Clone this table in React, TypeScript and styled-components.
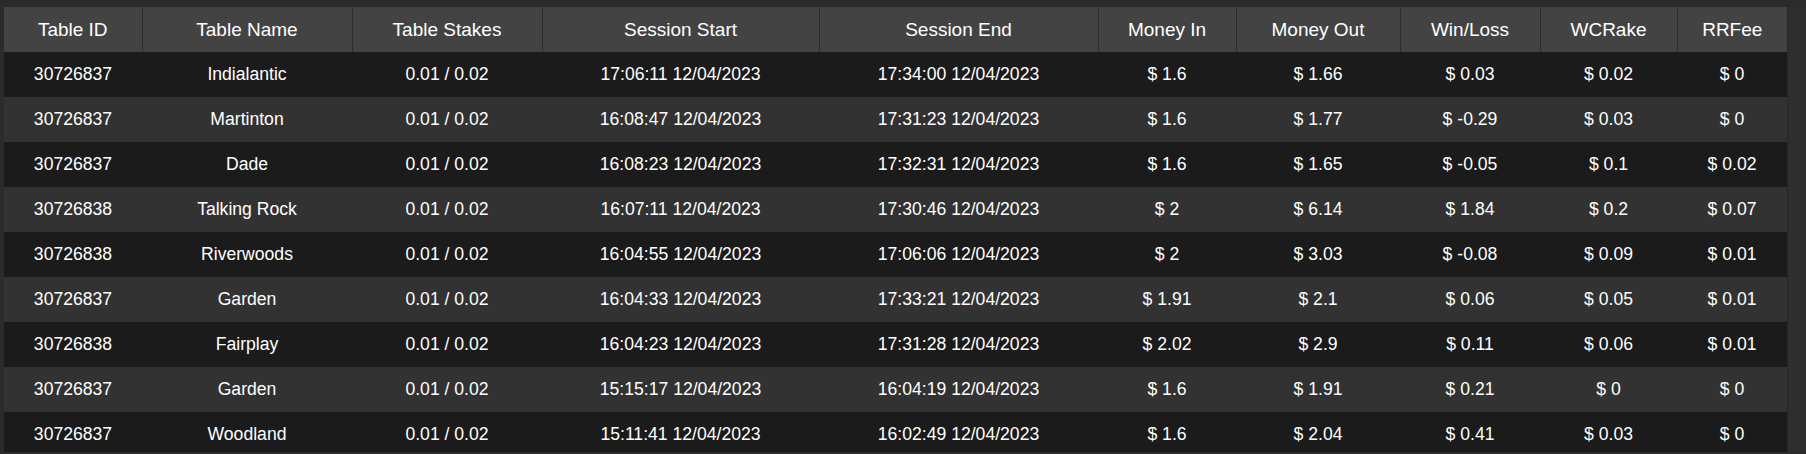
import React from "react";
import styled, { createGlobalStyle } from "styled-components";

const GlobalStyle = createGlobalStyle`
  html, body {
    margin: 0;
    padding: 0;
    background: #2b2b2b;
    overflow: hidden;
  }
  body {
    font-family: "Liberation Sans", Arial, Helvetica, sans-serif;
    color: #ffffff;
  }
`;

const Page = styled.div`
  box-sizing: border-box;
  width: 1806px;
  height: 454px;
  padding: 7px 0 0 4px;
  background: #2b2b2b;
`;

const Frame = styled.div`
  display: flex;
  height: 445px;
`;

const Viewport = styled.div`
  width: 1783px;
  flex: none;
  overflow: hidden;
`;

const ScrollTrack = styled.div`
  flex: 1;
  background: #2e2e2e;
  border-left: 1px solid #262626;
`;

const Table = styled.table`
  width: 1783px;
  border-collapse: collapse;
  table-layout: fixed;
  font-family: "Liberation Sans", Arial, Helvetica, sans-serif;
`;

const HeadCell = styled.th<{ $first?: boolean }>`
  height: 45px;
  padding: 0;
  background: #434343;
  color: #ffffff;
  font-size: 19px;
  font-weight: 400;
  text-align: center;
  border-left: ${(p) => (p.$first ? "none" : "1px solid #2d2d2d")};
`;

const Row = styled.tr<{ $alt: boolean }>`
  background: ${(p) => (p.$alt ? "#323232" : "#1b1b1b")};
`;

const Cell = styled.td`
  height: 45px;
  padding: 0;
  font-size: 17.6px;
  color: #ffffff;
  text-align: center;
  white-space: nowrap;
`;

const columns = [
  { label: "Table ID", width: 138 },
  { label: "Table Name", width: 210 },
  { label: "Table Stakes", width: 190 },
  { label: "Session Start", width: 277 },
  { label: "Session End", width: 279 },
  { label: "Money In", width: 138 },
  { label: "Money Out", width: 164 },
  { label: "Win/Loss", width: 140 },
  { label: "WCRake", width: 137 },
  { label: "RRFee", width: 110 },
];

const rows: string[][] = [
  ["30726837", "Indialantic", "0.01 / 0.02", "17:06:11 12/04/2023", "17:34:00 12/04/2023", "$ 1.6", "$ 1.66", "$ 0.03", "$ 0.02", "$ 0"],
  ["30726837", "Martinton", "0.01 / 0.02", "16:08:47 12/04/2023", "17:31:23 12/04/2023", "$ 1.6", "$ 1.77", "$ -0.29", "$ 0.03", "$ 0"],
  ["30726837", "Dade", "0.01 / 0.02", "16:08:23 12/04/2023", "17:32:31 12/04/2023", "$ 1.6", "$ 1.65", "$ -0.05", "$ 0.1", "$ 0.02"],
  ["30726838", "Talking Rock", "0.01 / 0.02", "16:07:11 12/04/2023", "17:30:46 12/04/2023", "$ 2", "$ 6.14", "$ 1.84", "$ 0.2", "$ 0.07"],
  ["30726838", "Riverwoods", "0.01 / 0.02", "16:04:55 12/04/2023", "17:06:06 12/04/2023", "$ 2", "$ 3.03", "$ -0.08", "$ 0.09", "$ 0.01"],
  ["30726837", "Garden", "0.01 / 0.02", "16:04:33 12/04/2023", "17:33:21 12/04/2023", "$ 1.91", "$ 2.1", "$ 0.06", "$ 0.05", "$ 0.01"],
  ["30726838", "Fairplay", "0.01 / 0.02", "16:04:23 12/04/2023", "17:31:28 12/04/2023", "$ 2.02", "$ 2.9", "$ 0.11", "$ 0.06", "$ 0.01"],
  ["30726837", "Garden", "0.01 / 0.02", "15:15:17 12/04/2023", "16:04:19 12/04/2023", "$ 1.6", "$ 1.91", "$ 0.21", "$ 0", "$ 0"],
  ["30726837", "Woodland", "0.01 / 0.02", "15:11:41 12/04/2023", "16:02:49 12/04/2023", "$ 1.6", "$ 2.04", "$ 0.41", "$ 0.03", "$ 0"],
];

export default function App() {
  return (
    <>
      <GlobalStyle />
      <Page>
        <Frame>
          <Viewport>
            <Table>
              <colgroup>
                {columns.map((c) => (
                  <col key={c.label} style={{ width: c.width }} />
                ))}
              </colgroup>
              <thead>
                <tr>
                  {columns.map((c, i) => (
                    <HeadCell key={c.label} $first={i === 0}>
                      {c.label}
                    </HeadCell>
                  ))}
                </tr>
              </thead>
              <tbody>
                {rows.map((r, i) => (
                  <Row key={i} $alt={i % 2 === 1}>
                    {r.map((v, j) => (
                      <Cell key={j}>{v}</Cell>
                    ))}
                  </Row>
                ))}
              </tbody>
            </Table>
          </Viewport>
          <ScrollTrack />
        </Frame>
      </Page>
    </>
  );
}
